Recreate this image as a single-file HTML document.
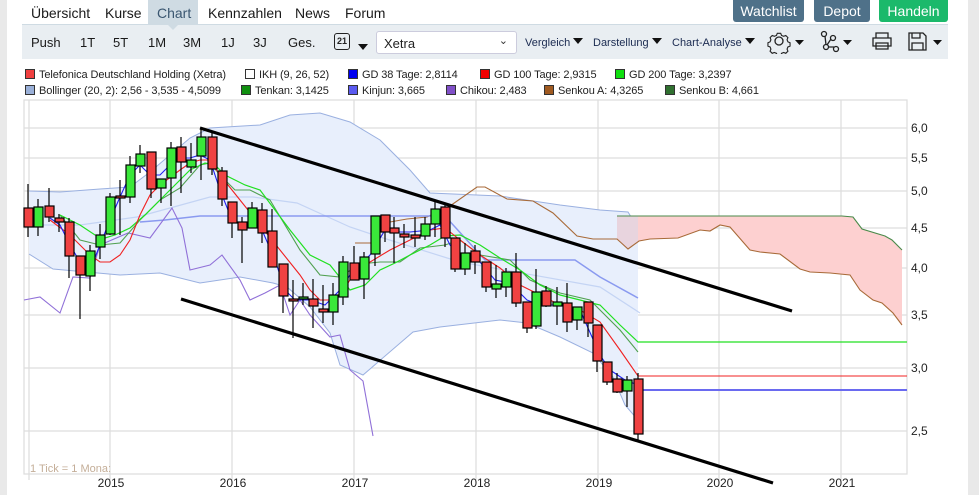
<!DOCTYPE html>
<html><head><meta charset="utf-8"><style>
*{margin:0;padding:0;box-sizing:border-box}
body{width:979px;height:495px;overflow:hidden;background:#fff;font-family:"Liberation Sans",sans-serif;position:relative;color:#222}
.a{position:absolute;white-space:nowrap}
.nav{font-size:14px;top:5px;color:#1a1a1a}
.btn{top:0;height:22px;color:#fff;font-size:14px;text-align:center;line-height:22px;border-radius:0 0 3px 3px}
.tb{font-size:13px;top:35px;color:#1a1a1a}
.sm{font-size:11px;top:37px;color:#1a2a50}
.lg{font-size:11px;letter-spacing:-0.1px;color:#222}
.sq{display:inline-block;width:10px;height:10px;border:1px solid #333;vertical-align:-1px;margin-right:4px}
.tri{display:inline-block;width:0;height:0;border-left:5px solid transparent;border-right:5px solid transparent;border-top:6px solid #111;vertical-align:2px;margin-left:3px}
</style></head><body>
<div class="a" style="left:0;top:0;width:7px;height:495px;background:#e9e9e9"></div>
<div class="a" style="left:968px;top:0;width:11px;height:495px;background:#e9e9e9"></div>
<div class="a" style="left:148px;top:0;width:50px;height:24px;background:#cfdbe3"></div>
<div class="a nav" style="left:31px">Übersicht</div>
<div class="a nav" style="left:105px">Kurse</div>
<div class="a nav" style="left:157px;color:#3a5670">Chart</div>
<div class="a nav" style="left:208px">Kennzahlen</div>
<div class="a nav" style="left:295px">News</div>
<div class="a nav" style="left:345px">Forum</div>
<div class="a btn" style="left:733px;width:71px;background:#4f7189">Watchlist</div>
<div class="a btn" style="left:814px;width:56px;background:#4f7189">Depot</div>
<div class="a btn" style="left:879px;width:69px;background:#1bb96b">Handeln</div>
<div class="a" style="left:22px;top:24px;width:926px;height:35px;background:#e9eef2;border-top:1px solid #cfdbe3"></div>
<div class="a" style="left:168px;top:25px;width:0;height:0;border-left:5px solid transparent;border-right:5px solid transparent;border-top:5px solid #cfdbe3"></div>
<div class="a tb" style="left:31px">Push</div>
<div class="a tb" style="left:80px">1T</div>
<div class="a tb" style="left:113px">5T</div>
<div class="a tb" style="left:148px">1M</div>
<div class="a tb" style="left:183px">3M</div>
<div class="a tb" style="left:221px">1J</div>
<div class="a tb" style="left:253px">3J</div>
<div class="a tb" style="left:288px">Ges.</div>
<div class="a" style="left:334px;top:33px;width:16px;height:17px;border:1.5px solid #222;border-radius:3px;font-size:9px;font-weight:bold;text-align:center;line-height:14px">21</div>
<div class="a" style="left:355px;top:39px"><span class="tri"></span></div>
<div class="a" style="left:376px;top:31px;width:141px;height:23px;background:#fff;border:1px solid #ccd;border-radius:3px;font-size:13px;padding:4px 7px">Xetra<span style="position:absolute;right:8px;top:2px;font-size:11px;color:#333">&#8964;</span></div>
<div class="a sm" style="left:525px">Vergleich<span class="tri"></span></div>
<div class="a sm" style="left:593px">Darstellung<span class="tri"></span></div>
<div class="a sm" style="left:672px">Chart-Analyse<span class="tri"></span></div>
<svg class="a" style="left:760px;top:28px" width="190" height="26" viewBox="0 0 190 26">
<g fill="none" stroke="#222" stroke-width="1.3">
<circle cx="19" cy="13" r="4"/>
<path d="M17 4h4l1 2.5 2.5 1 2.5-1 2.5 2.5-1 2.5 1 2.5 2.5 1v4l-2.5 1-1 2.5 1 2.5-2.5 2.5-2.5-1-2.5 1-1 2.5h-4l-1-2.5-2.5-1-2.5 1-2.5-2.5 1-2.5-1-2.5-2.5-1v-4l2.5-1 1-2.5-1-2.5 2.5-2.5 2.5 1 2.5-1z" transform="translate(19 13) scale(0.85) translate(-19 -13)"/>
<circle cx="64" cy="6" r="2.5"/><circle cx="73" cy="10" r="2.5"/><circle cx="66" cy="19" r="2.5"/><circle cx="76" cy="21" r="2.5"/>
<path d="M65 8l1 9M68 19h6M71 11l-4 6"/>
<path d="M116 10V5h12v5M113 10h18v8h-18zM116 15h12v6h-12z"/>
<path d="M149 5h14l3 3v14h-17zM152 5v5h8V5M152 22v-7h11v7"/>
</g>
<g fill="#111"><path d="M35 12h9l-4.5 5z"/><path d="M83 12h9l-4.5 5z"/><path d="M173 12h9l-4.5 5z"/></g>
</svg>
<div class="a lg" style="left:25px;top:69px"><span class="sq" style="background:#f04040"></span>Telefonica Deutschland Holding (Xetra)</div>
<div class="a lg" style="left:245px;top:69px"><span class="sq" style="background:#fff"></span>IKH (9, 26, 52)</div>
<div class="a lg" style="left:348px;top:69px"><span class="sq" style="background:#0000f0"></span>GD 38 Tage: 2,8114</div>
<div class="a lg" style="left:480px;top:69px"><span class="sq" style="background:#f00000"></span>GD 100 Tage: 2,9315</div>
<div class="a lg" style="left:615px;top:69px"><span class="sq" style="background:#10e010"></span>GD 200 Tage: 3,2397</div>
<div class="a lg" style="left:25px;top:85px"><span class="sq" style="background:#9ab0d8"></span>Bollinger (20, 2): 2,56 - 3,535 - 4,5099</div>
<div class="a lg" style="left:241px;top:85px"><span class="sq" style="background:#109010"></span>Tenkan: 3,1425</div>
<div class="a lg" style="left:348px;top:85px"><span class="sq" style="background:#5a5af0"></span>Kinjun: 3,665</div>
<div class="a lg" style="left:446px;top:85px"><span class="sq" style="background:#8050c8"></span>Chikou: 2,483</div>
<div class="a lg" style="left:544px;top:85px"><span class="sq" style="background:#a05a20"></span>Senkou A: 4,3265</div>
<div class="a lg" style="left:665px;top:85px"><span class="sq" style="background:#307030"></span>Senkou B: 4,661</div>
<svg class="a" style="left:0;top:0" width="979" height="495" viewBox="0 0 979 495">
<g stroke="#ddd" stroke-width="1.2" fill="none">
<path d="M24 100H907V474H24z"/>
<path d="M29 100V480M110 100V480M232 100V480M354 100V480M476 100V480M598 100V480M719 100V480M841 100V480"/>
<path d="M24 128H907M24 158H907M24 191H907M24 228H907M24 268H907M24 315H907M24 368H907M24 431H907"/>
</g>
<path d="M29 191L60 192L100 189L130 187L150 172L170 155L190 138L210 128L260 125L290 115L320 113L350 122L380 140L410 170L430 193L500 196L560 205L600 210L628 212L638 228L638 420L625 405L613 377L593 353L560 337L527 323L500 320L440 327L413 332L363 375L340 365L330 333L310 307L287 287L273 283L240 277L200 283L160 273L120 275L53 269L29 254Z" fill="#e8effc" stroke="none"/>
<path d="M29 191L60 192L100 189L130 187L150 172L170 155L190 138L210 128L260 125L290 115L320 113L350 122L380 140L410 170L430 193L500 196L560 205L600 210L628 212L638 228" fill="none" stroke="#9ab0e0" stroke-width="1"/>
<path d="M29 254L53 269L120 275L160 273L200 283L240 277L273 283L287 287L310 307L330 333L340 365L363 375L413 332L440 327L500 320L527 323L560 337L593 353L613 377L625 405L638 420" fill="none" stroke="#9ab0e0" stroke-width="1"/>
<path d="M29 225L80 225L137 217L170 208L210 197L253 197L297 203L350 227L380 237L460 262L600 287L640 313" fill="none" stroke="#c4d4f4" stroke-width="1.2"/>
<path d="M617 216H842L853 217L862 229L885 236L892 240L902 250L902 325L893 313L882 303L873 300L860 290L850 275L830 273L810 272L800 269L780 254L760 252L750 250L730 227L720 225L710 231L700 230L678 238L650 239L639 241L628 249L617 239Z" fill="#fdd0d0"/>
<path d="M617 216H638V241L628 249L617 239Z" fill="#e8d4de"/>
<path d="M355 243L377 243L390 222L407 219L427 217L450 206L477 187L485 187L507 199L533 201L553 213L577 236L593 239L617 239L628 249L639 241L650 239L678 238L700 230L710 231L720 225L730 227L750 250L760 252L780 254L800 269L810 272L830 273L850 275L860 290L873 300L882 303L893 313L902 325" fill="none" stroke="#a86a38" stroke-width="1.1"/>
<path d="M617 216H842L853 217L862 229L885 236L892 240L902 250" fill="none" stroke="#4a8a4a" stroke-width="1.1"/>
<path d="M140 222L165 220L200 216L445 216L485 260L575 260L600 277L638 298" fill="none" stroke="#8a9af0" stroke-width="1.5"/>
<path d="M24 300L40 297L60 313L73 277L90 278L100 245L128 233L150 238L172 208L182 228L190 270L210 265L222 255L240 280L250 300L265 293L280 285L290 315L300 300L310 315L330 337L340 335L350 370L363 381L373 436" fill="none" stroke="#9070d8" stroke-width="1.1"/>
<path d="M60 215L80 240L100 245L120 243L140 220L160 200L180 188L200 165L210 163L220 175L235 190L250 190L270 200L285 225L300 250L320 275L340 277L360 264L380 262L400 262L420 248L445 245L460 240L480 255L510 260L530 280L560 293L590 300L600 310L620 330L638 352" fill="none" stroke="#50a050" stroke-width="1.1"/>
<path d="M60 215L80 225L95 235L105 238L115 235L130 228L145 215L160 200L175 185L190 170L205 163L215 165L225 175L245 185L260 190L275 210L290 230L310 255L330 265L350 290L365 285L380 270L395 263L410 255L430 245L445 236L460 235L480 245L500 258L520 270L540 285L560 295L580 300L600 305L620 325L638 342H907" fill="none" stroke="#20e020" stroke-width="1.2"/>
<path d="M50 220L70 235L90 255L100 262L110 262L120 255L130 240L140 215L150 195L160 185L180 170L190 163L200 160L210 160L220 175L240 200L260 225L280 250L300 275L310 290L320 300L330 300L340 295L350 280L360 275L370 262L390 250L410 240L430 230L445 228L460 240L480 255L500 268L520 285L540 295L560 305L580 310L600 322L620 350L638 376H907" fill="none" stroke="#f02020" stroke-width="1.1"/>
<path d="M50 218L60 225L70 245L80 262L90 270L100 245L110 220L120 197L130 175L140 165L150 175L160 175L170 165L180 158L190 158L200 155L210 160L220 190L230 215L240 225L250 225L262 230L275 260L285 290L295 300L310 300L325 305L340 290L350 275L360 265L370 255L385 230L395 232L410 232L430 230L440 225L450 245L465 262L480 262L495 280L510 283L527 300L540 305L560 305L580 310L600 355L610 370L625 380L638 385" fill="none" stroke="#2020f0" stroke-width="1.1"/>
<path d="M638 390H907" stroke="#6a6af0" stroke-width="2"/>
<g stroke="#000" stroke-width="1.2">
<path d="M28 184V237M38 199V236M49 188V222M59 214V232M69 218V278M80 256V319M90 245V291M100 224V259M110 193V235M120 180V235M130 156V203M140 145V173M151 152V198M161 179V203M171 142V206M181 137V193M191 143V173M201 128V180M212 133V175M222 167V206M232 202V238M242 217V263M252 202V228M262 203V243M272 209V267M283 264V313M293 280V338M303 283V305M313 279V328M323 285V323M333 283V325M343 256V305M354 246V280M364 252V299M375 216V266M385 215V242M394 217V263M404 224V248M415 217V247M425 217V240M435 202V237M445 205V247M455 238V272M465 243V275M475 245V274M486 262V292M496 265V298M506 268V297M516 253V307M527 302V333M536 269V329M546 286V307M557 287V325M567 283V332M577 307V330M588 302V337M597 325V372M607 362V385M617 373V393M627 376V407M638 373V441"/>
</g>
<g stroke="#000" stroke-width="1.2" fill="#f04242">
<rect x="24" y="208" width="9" height="19"/><rect x="45" y="206" width="9" height="11"/><rect x="55" y="218" width="9" height="4"/><rect x="65" y="222" width="9" height="34"/><rect x="76" y="256" width="9" height="19"/><rect x="116" y="196" width="9" height="2"/><rect x="147" y="152" width="9" height="37"/><rect x="177" y="147" width="9" height="15"/><rect x="208" y="137" width="9" height="32"/><rect x="218" y="171" width="9" height="28"/><rect x="228" y="202" width="9" height="21"/><rect x="238" y="222" width="9" height="8"/><rect x="258" y="210" width="9" height="23"/><rect x="268" y="231" width="9" height="36"/><rect x="279" y="264" width="9" height="32"/><rect x="289" y="299" width="9" height="2"/><rect x="309" y="299" width="9" height="7"/><rect x="319" y="309" width="9" height="3"/><rect x="350" y="263" width="9" height="17"/><rect x="381" y="215" width="9" height="17"/><rect x="390" y="228" width="9" height="5"/><rect x="400" y="234" width="9" height="3"/><rect x="411" y="235" width="9" height="3"/><rect x="441" y="207" width="9" height="31"/><rect x="451" y="238" width="9" height="31"/><rect x="471" y="251" width="9" height="11"/><rect x="482" y="262" width="9" height="25"/><rect x="512" y="272" width="9" height="31"/><rect x="523" y="302" width="9" height="26"/><rect x="542" y="291" width="9" height="15"/><rect x="563" y="303" width="9" height="19"/><rect x="584" y="302" width="9" height="21"/><rect x="593" y="325" width="9" height="36"/><rect x="603" y="362" width="9" height="20"/><rect x="613" y="379" width="9" height="13"/><rect x="634" y="379" width="9" height="55"/>
</g>
<g stroke="#000" stroke-width="1.2" fill="#3ae83a">
<rect x="34" y="207" width="9" height="20"/><rect x="86" y="251" width="9" height="25"/><rect x="96" y="235" width="9" height="12"/><rect x="106" y="197" width="9" height="37"/><rect x="126" y="165" width="9" height="32"/><rect x="136" y="154" width="9" height="12"/><rect x="157" y="179" width="9" height="9"/><rect x="167" y="148" width="9" height="30"/><rect x="187" y="160" width="9" height="7"/><rect x="197" y="137" width="9" height="19"/><rect x="248" y="208" width="9" height="20"/><rect x="299" y="297" width="9" height="2"/><rect x="329" y="295" width="9" height="17"/><rect x="339" y="262" width="9" height="35"/><rect x="360" y="257" width="9" height="22"/><rect x="371" y="216" width="9" height="38"/><rect x="421" y="224" width="9" height="12"/><rect x="431" y="209" width="9" height="15"/><rect x="461" y="253" width="9" height="16"/><rect x="492" y="284" width="9" height="5"/><rect x="502" y="272" width="9" height="15"/><rect x="532" y="292" width="9" height="34"/><rect x="553" y="302" width="9" height="4"/><rect x="573" y="307" width="9" height="13"/><rect x="623" y="380" width="9" height="11"/>
</g>
<path d="M200 128L792 311M181 299L773 483" stroke="#000" stroke-width="3.2"/>
<g font-family="Liberation Sans,sans-serif" font-size="12" fill="#222">
<text x="911" y="132">6,0</text><text x="911" y="162">5,5</text><text x="911" y="195">5,0</text><text x="911" y="232">4,5</text><text x="911" y="272">4,0</text><text x="911" y="319">3,5</text><text x="911" y="372">3,0</text><text x="911" y="435">2,5</text>
<g text-anchor="middle"><text x="111" y="487">2015</text><text x="233" y="487">2016</text><text x="355" y="487">2017</text><text x="477" y="487">2018</text><text x="599" y="487">2019</text><text x="720" y="487">2020</text><text x="842" y="487">2021</text></g>
<text x="30" y="472" fill="#c4ae98" font-size="11">1 Tick = 1 Mona:</text>
</g>
</svg>
</body></html>
